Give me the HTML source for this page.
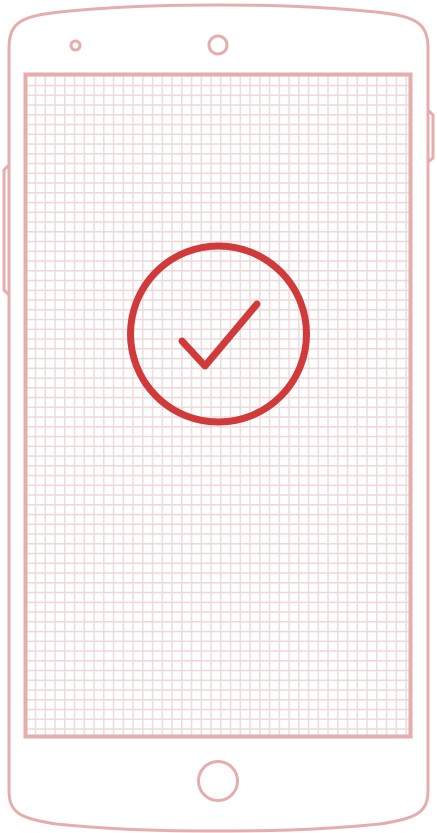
<!DOCTYPE html>
<html><head><style>
html,body{margin:0;padding:0;background:#fff;width:437px;height:833px;overflow:hidden}
</style></head><body>
<svg width="437" height="833" viewBox="0 0 437 833" xmlns="http://www.w3.org/2000/svg">
<defs>
<pattern id="g" x="25" y="75" width="9.75" height="9.75" patternUnits="userSpaceOnUse">
<rect x="0" y="0" width="1.6" height="9.75" fill="#e8dfe0"/>
<rect x="0" y="0" width="9.75" height="1.6" fill="#f0d8da"/>
</pattern>
</defs>
<g fill="none" stroke="#e6adad" stroke-width="3">
<path d="M9 48 C9 22 22 16 60 12 C120 6 170 5 218 5 C266 5 316 6 376 12 C414 16 428 22 428 48 L428 790 C428 812 418 818 380 824 C320 830 270 831 218 831 C166 831 116 830 56 824 C18 818 9 812 9 790 Z"/>
<path d="M9 165 L4 170 L4 290 L9 295"/>
<path d="M428 110 L433 115 L433 158 L428 162"/>
<circle cx="75.5" cy="45.5" r="4.5"/>
<circle cx="218" cy="45" r="9"/>
<circle cx="218" cy="781" r="19.5"/>
</g>
<rect x="25" y="75" width="386" height="662" fill="url(#g)"/>
<rect x="25.5" y="74.5" width="385" height="662" fill="none" stroke="#e6adad" stroke-width="4"/>
<circle cx="218.5" cy="334" r="88" fill="none" stroke="#d13a3a" stroke-width="7"/>
<path d="M182 341 L205 366 L257 304" fill="none" stroke="#d13a3a" stroke-width="7" stroke-linecap="round" stroke-linejoin="round"/>
</svg>
</body></html>
